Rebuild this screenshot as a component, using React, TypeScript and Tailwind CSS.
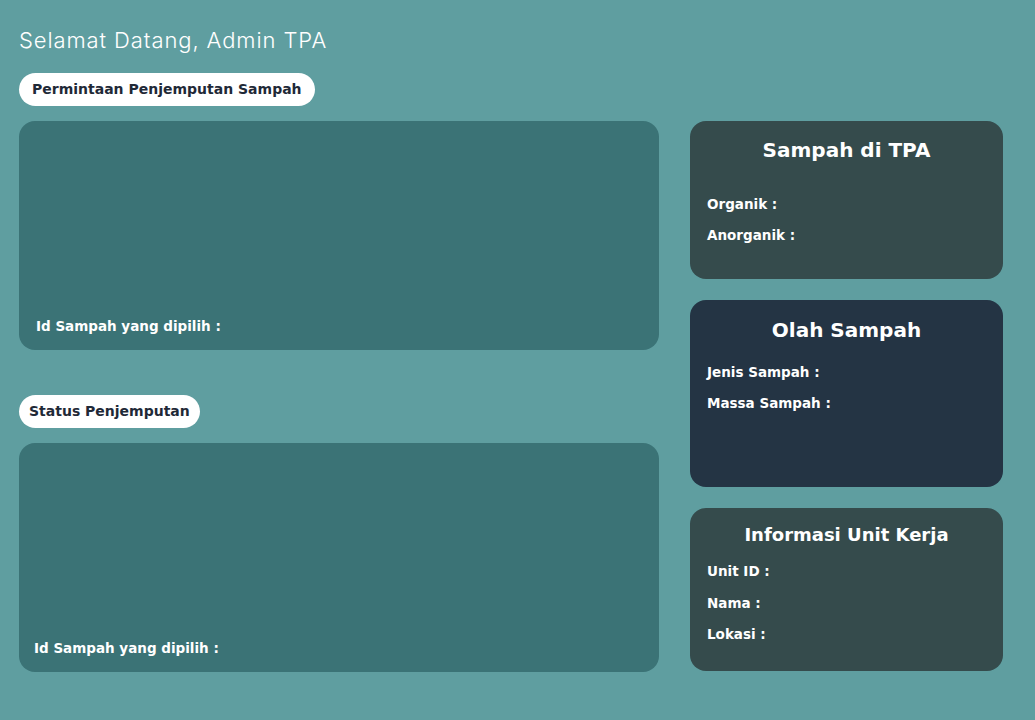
import React from "react";

const bold = { fontFamily: "'DejaVu Sans', 'Noto Sans', sans-serif" };
const light = { fontFamily: "Inter, 'Noto Sans', sans-serif" };

export default function App() {
  return (
    <div className="min-h-screen w-full bg-[#5f9ea0] px-[19px] pt-[25px] pb-[49px]" style={bold}>
      <div className="flex gap-[31px]">
        <div className="flex w-[640px] flex-col">
          <h1 className="text-[22px] font-light leading-[30px] tracking-[0.9px] text-white" style={light}>
            Selamat Datang, Admin TPA
          </h1>
          <div className="mt-[18px] self-start rounded-full bg-white px-[13px] text-[14px] font-bold leading-[33px] text-[#1f2937]">
            Permintaan Penjemputan Sampah
          </div>
          <div className="mt-[15px] flex h-[229px] flex-col justify-end rounded-2xl bg-[#3b7376] px-[17px] pb-[14px]">
            <p className="text-[13.5px] font-bold leading-[20px] text-white">Id Sampah yang dipilih :</p>
          </div>
          <div className="mt-[45px] self-start rounded-full bg-white px-[10px] text-[14px] font-bold leading-[33px] text-[#1f2937]">
            Status Penjemputan
          </div>
          <div className="mt-[15px] flex h-[229px] flex-col justify-end rounded-2xl bg-[#3b7376] px-[15px] pb-[14px]">
            <p className="text-[13.5px] font-bold leading-[20px] text-white">Id Sampah yang dipilih :</p>
          </div>
        </div>
        <div className="mt-[96px] flex w-[313px] flex-col gap-[21px]">
          <div className="h-[158px] rounded-2xl bg-[#354b4c] px-[17px] pt-[13px] text-white">
            <h2 className="text-center text-[20px] font-bold leading-[32px]">Sampah di TPA</h2>
            <div className="mt-[23px] text-[13.5px] font-bold leading-[31px]">
              <p>Organik :</p>
              <p>Anorganik :</p>
            </div>
          </div>
          <div className="h-[187px] rounded-2xl bg-[#243444] px-[17px] pt-[14px] text-white">
            <h2 className="text-center text-[20px] font-bold leading-[32px]">Olah Sampah</h2>
            <div className="mt-[11px] text-[13.5px] font-bold leading-[31px]">
              <p>Jenis Sampah :</p>
              <p>Massa Sampah :</p>
            </div>
          </div>
          <div className="h-[163px] rounded-2xl bg-[#354b4c] px-[17px] pt-[13px] text-white">
            <h2 className="text-center text-[18px] font-bold leading-[28px]">Informasi Unit Kerja</h2>
            <div className="mt-[7px] text-[13.5px] font-bold leading-[31.5px]">
              <p>Unit ID :</p>
              <p>Nama :</p>
              <p>Lokasi :</p>
            </div>
          </div>
        </div>
      </div>
    </div>
  );
}
